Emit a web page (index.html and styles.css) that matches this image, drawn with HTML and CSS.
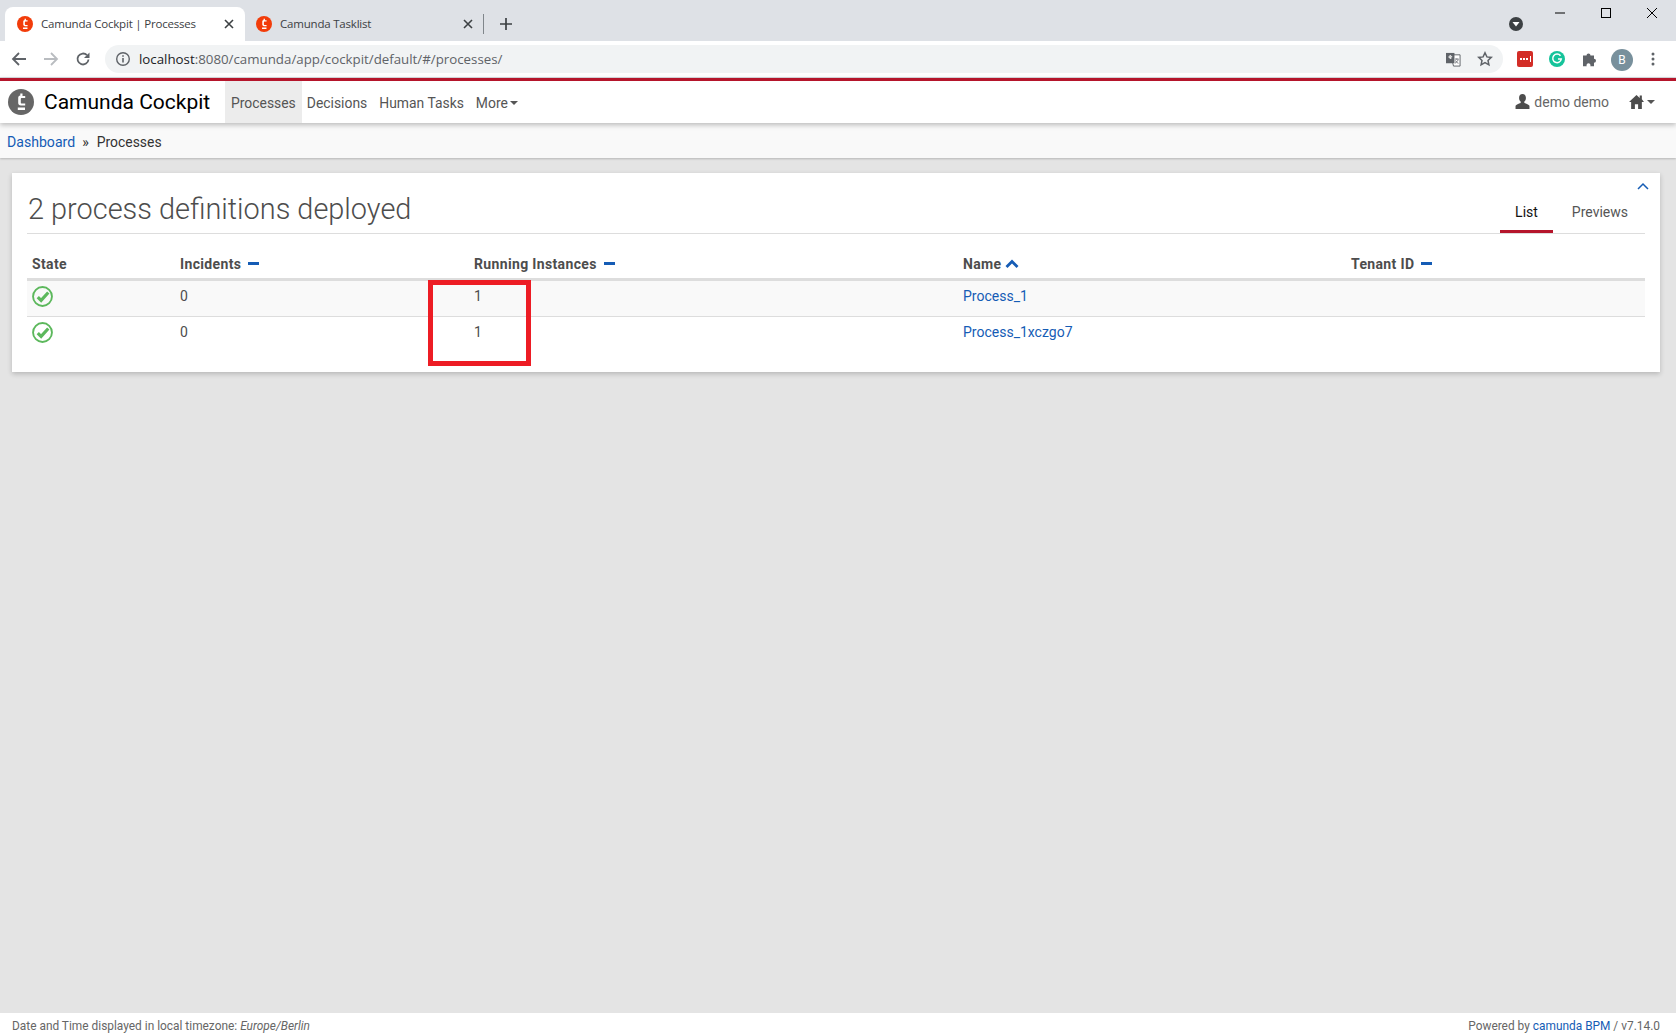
FILE: index.html
```html
<!DOCTYPE html>
<html lang="en">
<head>
    <meta charset="UTF-8">
    <title>Camunda Cockpit | Processes</title>
    <link rel="stylesheet" href="styles.css">
</head>
<body>
    <!-- browser frame -->
    <div class="tabstrip">
        <div class="tab tab-active">
            <svg class="favicon" viewBox="0 0 26 26"><circle cx="13" cy="13" r="13" fill="#f23c0a"/><path d="M12.300 4.500h2.200v2.500h2.700v2h-3.400c-.7 0-1 .3-1 1v3.500c0 .7.3 1 1 1h3.400v2h-4.400c-1.600 0-2.600-1-2.600-2.500v-5c0-1.300.7-2.200 2.100-2.500zM9.800 18.500H17V21H9.800z" fill="#fff"/></svg>
            <span class="tab-title">Camunda Cockpit | Processes</span>
            <svg class="tab-close" viewBox="0 0 10 10"><path d="M1 1l8 8M9 1l-8 8" stroke="#3c4043" stroke-width="1.6"/></svg>
        </div>
        <div class="tab tab-other">
            <svg class="favicon" viewBox="0 0 26 26"><circle cx="13" cy="13" r="13" fill="#f23c0a"/><path d="M12.300 4.500h2.200v2.500h2.700v2h-3.400c-.7 0-1 .3-1 1v3.500c0 .7.3 1 1 1h3.400v2h-4.400c-1.600 0-2.600-1-2.600-2.500v-5c0-1.300.7-2.200 2.100-2.500zM9.800 18.500H17V21H9.800z" fill="#fff"/></svg>
            <span class="tab-title">Camunda Tasklist</span>
            <svg class="tab-close" viewBox="0 0 10 10"><path d="M1 1l8 8M9 1l-8 8" stroke="#3c4043" stroke-width="1.6"/></svg>
        </div>
        <div class="tab-sep"></div>
        <svg class="new-tab" viewBox="0 0 12 12"><path d="M6 0v12M0 6h12" stroke="#3c4043" stroke-width="1.7"/></svg>
        <svg class="tab-search" viewBox="0 0 14 14"><circle cx="7" cy="7" r="7" fill="#3c4043"/><path d="M3.500 5h7L7 9.500z" fill="#fff"/></svg>
        <div class="win-btn"><svg width="10" height="10" viewBox="0 0 10 10"><path d="M0 5h10" stroke="#000" stroke-width="1"/></svg></div>
        <div class="win-btn"><svg width="10" height="10" viewBox="0 0 10 10"><rect x=".5" y=".5" width="9" height="9" fill="none" stroke="#000"/></svg></div>
        <div class="win-btn"><svg width="10" height="10" viewBox="0 0 10 10"><path d="M0 0l10 10M10 0L0 10" stroke="#000" stroke-width="1"/></svg></div>
    </div>
    <div class="toolbar">
        <svg class="tool-icon" viewBox="0 0 16 16"><path d="M15 8H2M8 2L2 8l6 6" fill="none" stroke="#5f6368" stroke-width="1.8"/></svg>
        <svg class="tool-icon" viewBox="0 0 16 16"><path d="M1 8h13M8 2l6 6-6 6" fill="none" stroke="#b9bcc0" stroke-width="1.8"/></svg>
        <svg class="tool-icon" viewBox="0 0 16 16"><path d="M13.500 8.500A5.500 5.500 0 1 1 12 4.200" fill="none" stroke="#5f6368" stroke-width="1.8"/><path d="M14.500 1.500v5.500H9z" fill="#5f6368"/></svg>
        <div class="omnibox">
            <svg class="info-icon" viewBox="0 0 16 16"><circle cx="8" cy="8" r="6.3" fill="none" stroke="#5f6368" stroke-width="1.4"/><path d="M7.200 7h1.600v4.500H7.200zM7.200 4.200h1.600v1.600H7.200z" fill="#5f6368"/></svg>
            <span class="url"><span class="url-host">localhost</span>:8080/camunda/app/cockpit/default/#/processes/</span>
            <svg class="translate-icon" viewBox="0 0 16 16"><path d="M5 3h10v12H8z" fill="#fff" stroke="#5f6368"/><rect x="0" y="1" width="9" height="11" fill="#5f6368"/><path d="M6.600 5H4.500v1.400h1.200A1.500 1.500 0 1 1 5.500 4" fill="none" stroke="#fff"/><path d="M9.500 7.500h4M11.500 7v1M13 8c-.5 2-2 3-3.500 4M10 9c.6 1.300 2 2.600 3.300 3" fill="none" stroke="#5f6368" stroke-width=".9"/></svg>
            <svg class="star-icon" viewBox="0 0 16 16"><path d="M8 1.800l1.900 4.100 4.400.5-3.300 3 .9 4.400L8 11.600l-3.900 2.200.9-4.400-3.300-3 4.400-.5z" fill="none" stroke="#5f6368" stroke-width="1.500"/></svg>
        </div>
        <div class="ext ext-lastpass"><span></span><span></span><span></span><i></i></div>
        <svg class="ext-icon" viewBox="0 0 16 16"><circle cx="8" cy="8" r="8" fill="#15c39a"/><path d="M11.500 4.800A4.300 4.300 0 1 0 12.300 8H9" fill="none" stroke="#fff" stroke-width="1.500"/></svg>
        <svg class="ext-icon puzzle" viewBox="0 0 16 16"><path d="M1 4.500h3.500a2 2 0 1 1 4 0H12v3.300a2 2 0 1 1 0 4V15.200H8.300a2 2 0 1 0-3.600 0H1z" fill="#5f6368"/></svg>
        <div class="avatar">B</div>
        <svg class="ext-icon dots" viewBox="0 0 16 16"><circle cx="8" cy="3" r="1.500" fill="#5f6368"/><circle cx="8" cy="8" r="1.500" fill="#5f6368"/><circle cx="8" cy="13" r="1.500" fill="#5f6368"/></svg>
    </div>

    <!-- camunda app -->
    <header class="app-header">
        <svg class="logo" viewBox="0 0 26 26"><circle cx="13" cy="13" r="13" fill="#666"/><path d="M12.300 4.500h2.200v2.500h2.700v2h-3.400c-.7 0-1 .3-1 1v3.500c0 .7.3 1 1 1h3.400v2h-4.400c-1.600 0-2.600-1-2.600-2.500v-5c0-1.300.7-2.200 2.100-2.500zM9.800 18.500H17V21H9.800z" fill="#fff"/></svg>
        <a class="brand">Camunda Cockpit</a>
        <nav class="main-nav">
            <a class="nav-item active">Processes</a>
            <a class="nav-item">Decisions</a>
            <a class="nav-item">Human Tasks</a>
            <a class="nav-item">More<span class="caret"></span></a>
        </nav>
        <div class="user-nav">
            <svg class="user-icon" viewBox="0 0 14 14"><path d="M7 0c2 0 3.200 1.500 3.200 3.700 0 1.500-.7 2.700-1.500 3.400v1.300c1.900.7 4.300 1.500 4.800 2.600V14H.5v-3c.5-1.100 2.900-1.900 4.800-2.600V7.100c-.8-.7-1.500-1.900-1.500-3.400C3.800 1.500 5 0 7 0z" fill="#4d4d4d"/></svg>
            <span class="user-name">demo demo</span>
            <svg class="home-icon" viewBox="0 0 14 13"><path d="M10 .5h2v3.500l2 2.500h-2V13H8.500V8.500h-3V13H2V6.500H0L7 0l3 2.700z" fill="#4d4d4d"/></svg>
            <span class="caret"></span>
        </div>
    </header>
    <div class="breadcrumb">
        <a class="link">Dashboard</a><span class="crumb-sep">»</span><span class="crumb-now">Processes</span>
    </div>

    <main class="content">
        <section class="card">
            <svg class="collapse" viewBox="0 0 12 8"><path d="M1 7l5-5 5 5" fill="none" stroke="#155cb5" stroke-width="1.500"/></svg>
            <div class="card-head">
                <h1>2 process definitions deployed</h1>
                <div class="view-tabs">
                    <a class="view-tab active">List</a>
                    <a class="view-tab">Previews</a>
                </div>
            </div>
            <table class="proc-table">
                <colgroup>
                    <col class="col-state"><col class="col-incidents"><col class="col-running"><col class="col-name"><col>
                </colgroup>
                <thead>
                    <tr>
                        <th>State</th>
                        <th>Incidents<span class="sort-none"></span></th>
                        <th>Running Instances<span class="sort-none"></span></th>
                        <th>Name<svg class="sort-up" viewBox="0 0 14 10"><path d="M1.500 8L7 2.500 12.500 8" fill="none" stroke="#155cb5" stroke-width="2.800"/></svg></th>
                        <th>Tenant ID<span class="sort-none"></span></th>
                    </tr>
                </thead>
                <tbody>
                    <tr class="striped">
                        <td class="state"><svg class="ok-icon" viewBox="0 0 20 20"><circle cx="10" cy="10" r="9" fill="none" stroke="#5cb85c" stroke-width="1.800"/><path d="M5.500 10.500l3.200 3.200 6.800-7.500" fill="none" stroke="#5cb85c" stroke-width="3"/></svg></td>
                        <td>0</td>
                        <td>1</td>
                        <td><a class="link">Process_1</a></td>
                        <td></td>
                    </tr>
                    <tr>
                        <td class="state"><svg class="ok-icon" viewBox="0 0 20 20"><circle cx="10" cy="10" r="9" fill="none" stroke="#5cb85c" stroke-width="1.800"/><path d="M5.500 10.500l3.200 3.200 6.800-7.500" fill="none" stroke="#5cb85c" stroke-width="3"/></svg></td>
                        <td>0</td>
                        <td>1</td>
                        <td><a class="link">Process_1xczgo7</a></td>
                        <td></td>
                    </tr>
                </tbody>
            </table>
            <div class="red-mark"></div>
        </section>
    </main>

    <footer class="app-footer">
        <span>Date and Time displayed in local timezone: <em>Europe/Berlin</em></span>
        <span>Powered by <a class="link">camunda BPM</a> / v7.14.0</span>
    </footer>
</body>
</html>
```

FILE: styles.css
```css
* {
    box-sizing: border-box;
}
html, body {
    height: 100%;
}
body {
    margin: 0;
    display: flex;
    flex-direction: column;
    overflow: hidden;
    background-color: #e4e4e4;
    font-family: Roboto, "Liberation Sans", sans-serif;
    font-size: 14px;
    color: #4d4d4d;
}
.link {
    color: #155cb5;
}

/* browser frame */
.tabstrip {
    display: flex;
    align-items: flex-start;
    height: 41px;
    padding: 0 1px 0 5px;
    background-color: #dee1e6;
}
.tab {
    display: flex;
    align-items: center;
    width: 240px;
    height: 34px;
    margin-top: 7px;
    padding: 0 11px 0 12px;
    border-radius: 8px 8px 0 0;
    font-family: "Open Sans", sans-serif;
    font-size: 11.5px;
    letter-spacing: -0.2px;
    color: #3c4043;
}
.tab-active {
    background-color: #fff;
}
.tab-other {
    padding: 0 12px 0 11px;
}
.favicon {
    width: 16px;
    height: 16px;
    margin-right: 8px;
}
.tab-title {
    flex: 1;
    margin-bottom: 2px;
}
.tab-close {
    width: 10px;
    height: 10px;
}
.tab-sep {
    width: 1px;
    height: 20px;
    margin-top: 14px;
    margin-left: -2px;
    background-color: #80868b;
}
.new-tab {
    width: 12px;
    height: 12px;
    margin: 18px 0 0 16px;
}
.tab-search {
    width: 14px;
    height: 14px;
    margin: 17px 14px 0 auto;
}
.win-btn {
    display: flex;
    align-items: center;
    justify-content: center;
    width: 46px;
    height: 26px;
}
.toolbar {
    display: flex;
    align-items: center;
    height: 37px;
    padding-left: 11px;
    background-color: #fff;
    border-bottom: 1px solid #dadce0;
}
.tool-icon {
    width: 16px;
    height: 16px;
    margin-right: 16px;
}
.omnibox {
    display: flex;
    align-items: center;
    width: 1398px;
    height: 28px;
    margin-left: -2px;
    margin-right: 14px;
    padding-left: 10px;
    border-radius: 14px;
    background-color: #f1f3f4;
    font-family: "Open Sans", sans-serif;
    font-size: 13.3px;
    color: #5f6368;
}
.info-icon {
    width: 16px;
    height: 16px;
    margin-right: 8px;
}
.url {
    flex: 1;
}
.url-host {
    color: #202124;
}
.translate-icon {
    width: 15px;
    height: 15px;
    margin-right: 16px;
}
.star-icon {
    width: 16px;
    height: 16px;
    margin-right: 10px;
}
.ext {
    display: flex;
    align-items: center;
    justify-content: center;
    gap: 1px;
    width: 16px;
    height: 16px;
    margin-right: 16px;
    border-radius: 2px;
    background-color: #d32d27;
}
.ext span {
    width: 2px;
    height: 2px;
    background-color: #fff;
}
.ext i {
    width: 1px;
    height: 6px;
    margin-left: 1px;
    background-color: #fff;
}
.ext-icon {
    width: 16px;
    height: 16px;
    margin-right: 16px;
}
.puzzle {
    margin-left: 1px;
}
.avatar {
    width: 22px;
    height: 22px;
    margin: 0 12px -1px -3px;
    border-radius: 50%;
    background-color: #78909c;
    color: #fff;
    font-size: 12px;
    line-height: 22px;
    text-align: center;
}
.dots {
    margin-right: 0;
}

/* app header */
.app-header {
    position: relative;
    z-index: 2;
    display: flex;
    align-items: center;
    height: 45px;
    padding-left: 8px;
    border-top: 3px solid #b5152b;
    background-color: #fff;
    box-shadow: 0 2px 5px rgba(0, 0, 0, 0.25);
}
.logo {
    width: 26px;
    height: 26px;
    margin-right: 10px;
}
.brand {
    width: 181px;
    font-size: 21px;
    color: #000;
    white-space: nowrap;
}
.main-nav {
    display: flex;
    align-self: stretch;
}
.nav-item {
    display: flex;
    align-items: center;
    padding: 2px 6px 0;
    font-size: 13.9px;
    color: #555;
}
.active.nav-item {
    margin-right: -1px;
    background-color: #ececec;
}
.caret {
    display: inline-block;
    width: 0;
    height: 0;
    margin-left: 2px;
    border-top: 4px solid #555;
    border-left: 4px solid transparent;
    border-right: 4px solid transparent;
}
.user-nav {
    display: flex;
    align-items: center;
    margin-left: auto;
    padding-right: 21px;
}
.user-nav .caret {
    margin-left: 3px;
}
.user-icon {
    width: 15px;
    height: 15px;
    margin: 0 4px 2px 0;
}
.user-name {
    color: #666;
}
.home-icon {
    width: 15px;
    height: 14px;
    margin-left: 20px;
}
.breadcrumb {
    display: flex;
    align-items: center;
    height: 35px;
    padding: 2px 0 0 7px;
    background-color: #f9f9f9;
    box-shadow: 0 1px 2px rgba(0, 0, 0, 0.2);
    font-size: 14.1px;
    color: #333;
}
.crumb-sep {
    margin: 0 8px 0 7px;
}
.crumb-now {
    font-size: 13.9px;
}

/* process list */
.content {
    flex: 1;
    padding: 15px 16px 0 12px;
}
.card {
    position: relative;
    height: 199px;
    padding: 0 15px;
    background-color: #fff;
    box-shadow: 0 2px 5px rgba(0, 0, 0, 0.2);
}
.collapse {
    position: absolute;
    top: 9px;
    right: 11px;
    width: 12px;
    height: 8px;
}
.card-head {
    display: flex;
    align-items: flex-end;
    justify-content: space-between;
    height: 61px;
    border-bottom: 1px solid #ddd;
}
h1 {
    margin: 0 0 5px 1px;
    font-size: 28.900px;
    font-weight: 300;
    line-height: 38px;
    color: #4d4d4d;
}
.view-tabs {
    display: flex;
    margin-right: 1px;
}
.view-tab {
    height: 38px;
    padding: 9px 16px 0;
    color: #555;
}
.view-tab.active {
    margin-right: 3px;
    padding: 9px 15px 0;
    border-bottom: 3px solid #b5152b;
    color: #111;
}
.proc-table {
    width: 100%;
    border-collapse: collapse;
    table-layout: fixed;
}
.col-state {
    width: 148px;
}
.col-incidents {
    width: 294px;
}
.col-running {
    width: 489px;
}
.col-name {
    width: 388px;
}
.proc-table th {
    height: 45px;
    padding: 17px 5px 0;
    border-bottom: 3px solid #ddd;
    text-align: left;
    font-weight: 700;
    letter-spacing: 0.35px;
    color: #4d4d4d;
}
.proc-table td {
    height: 36px;
    padding: 0 5px 4px;
}
.proc-table tr + tr td {
    border-top: 1px solid #ddd;
}
.striped td {
    background-color: #f9f9f9;
}
.proc-table .striped td {
    height: 37px;
    padding-bottom: 5px;
}
.proc-table .striped .state {
    padding-bottom: 3px;
}
.sort-none {
    display: inline-block;
    width: 11px;
    height: 3px;
    margin: 0 0 4px 7px;
    background-color: #155cb5;
}
.sort-up {
    width: 14px;
    height: 10px;
    margin-left: 4px;
}
.ok-icon {
    display: block;
    width: 21px;
    height: 21px;
}
.red-mark {
    position: absolute;
    top: 107px;
    left: 416px;
    width: 103px;
    height: 86px;
    border: 5px solid #ed1c24;
}

.app-footer {
    display: flex;
    justify-content: space-between;
    height: 23px;
    padding: 6px 16px 0 12px;
    background-color: #fff;
    font-size: 11.900px;
    color: #666;
}
```
